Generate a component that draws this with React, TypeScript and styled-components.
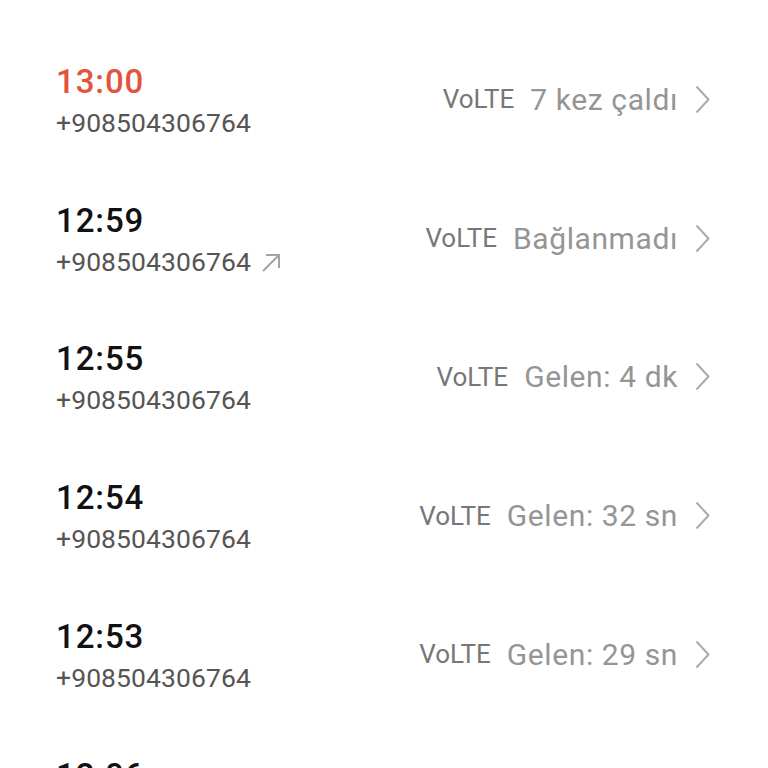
import React from "react";
import styled, { createGlobalStyle } from "styled-components";

const Global = createGlobalStyle`
  html, body { margin: 0; padding: 0; background: #ffffff; }
  body { font-family: Roboto, "Noto Sans", "Liberation Sans", sans-serif; overflow: hidden; }
`;

const List = styled.div`
  padding: 32px 58px 0 56px;
  display: flex;
  flex-direction: column;
`;

const Row = styled.div`
  height: 138.75px;
  display: flex;
  align-items: center;
  justify-content: space-between;
`;

const Left = styled.div`
  display: flex;
  flex-direction: column;
  gap: 4px;
  margin-bottom: 1px;
`;

const Time = styled.div<{ $missed?: boolean }>`
  font-size: 33px;
  line-height: 40px;
  font-weight: 500;
  letter-spacing: 0.9px;
  color: ${(p) => (p.$missed ? "#e4533b" : "#111111")};
`;

const NumberLine = styled.div`
  display: flex;
  align-items: center;
  gap: 10px;
  font-size: 26.5px;
  line-height: 34px;
  letter-spacing: 0.1px;
  color: #555555;
`;

const Right = styled.div`
  display: flex;
  align-items: center;
  padding-bottom: 4px;
`;

const Volte = styled.span`
  font-size: 26px;
  color: #777777;
  margin-right: 16px;
`;

const Status = styled.span`
  font-size: 30px;
  letter-spacing: 0.6px;
  color: #959595;
  margin-right: 17px;
`;

const Chevron = () => (
  <svg width="15" height="29" viewBox="0 0 15 29" fill="none">
    <polyline points="1.5,1.5 13.5,14.5 1.5,27.5" stroke="#ababab" strokeWidth="2" strokeLinejoin="round" />
  </svg>
);

const Outgoing = () => (
  <svg width="20" height="20" viewBox="0 0 20 20" fill="none" style={{ marginTop: 2 }}>
    <line x1="2" y1="18" x2="18" y2="2" stroke="#a3a3a3" strokeWidth="2" />
    <polyline points="5,2 18,2 18,15" stroke="#a3a3a3" strokeWidth="2" />
  </svg>
);

type Call = { time: string; missed?: boolean; out?: boolean; status: string };

const calls: Call[] = [
  { time: "13:00", missed: true, status: "7 kez çaldı" },
  { time: "12:59", out: true, status: "Bağlanmadı" },
  { time: "12:55", status: "Gelen: 4 dk" },
  { time: "12:54", status: "Gelen: 32 sn" },
  { time: "12:53", status: "Gelen: 29 sn" },
  { time: "12:06", status: "Gelen: 1 dk" },
];

export default function App() {
  return (
    <>
      <Global />
      <List>
        {calls.map((c, i) => (
          <Row key={i}>
            <Left>
              <Time $missed={c.missed}>{c.time}</Time>
              <NumberLine>
                +908504306764
                {c.out && <Outgoing />}
              </NumberLine>
            </Left>
            <Right>
              <Volte>VoLTE</Volte>
              <Status>{c.status}</Status>
              <Chevron />
            </Right>
          </Row>
        ))}
      </List>
    </>
  );
}
